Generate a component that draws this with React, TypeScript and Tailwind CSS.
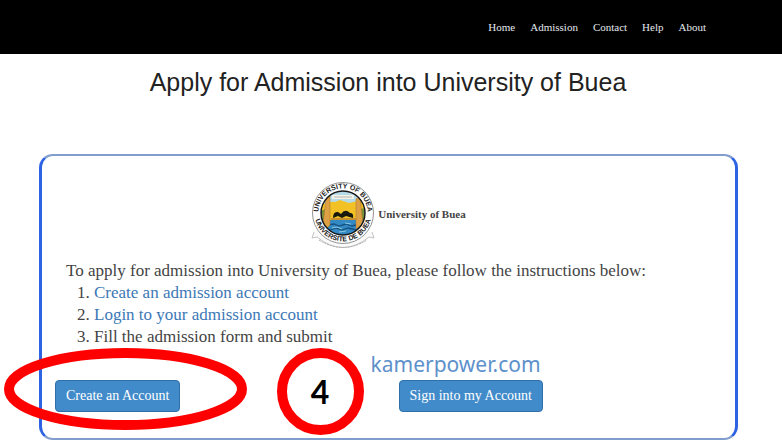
const navItems = ["Home", "Admission", "Contact", "Help", "About"];

const buttonClass =
  "h-8 rounded border border-[#2f70ab] bg-[#428bca] px-2.5 text-[14px] leading-5 text-white whitespace-nowrap";

function Seal() {
  return (
    <svg viewBox="0 0 64 68" className="h-[68px] w-16" role="img" aria-label="University of Buea seal">
      <defs>
        <path id="seal-top" d="M7.8 36 A24.7 24.7 0 1 1 56.2 36" />
        <path id="seal-bottom" d="M5 40 A28.5 28.5 0 0 0 59 40" />
        <clipPath id="seal-scene">
          <circle cx="32" cy="31" r="22" />
        </clipPath>
      </defs>
      <path d="M3 50 L1 56 L6 55 Q32 76 58 55 L63 56 L61 50" fill="#fafafa" stroke="#aaa" strokeWidth="0.7" />
      <path d="M8 58 Q32 73 56 58" fill="none" stroke="#aaa" strokeWidth="1" strokeDasharray="2 1" />
      <circle cx="32" cy="31" r="30.5" fill="#fff" stroke="#777" strokeWidth="0.8" />
      <g clipPath="url(#seal-scene)">
        <rect x="8" y="8" width="48" height="48" fill="#b5dbe8" />
        <path d="M9 24 Q18 19 24 20 L29 18 L38 21 L55 17 V42 H9Z" fill="#f2c126" />
        <path d="M9 29 L17 26 L19 38 L9 40Z M47 27 L55 26 V40 L47 38Z" fill="#789039" />
        <rect x="9" y="38" width="46" height="18" fill="#3389c4" />
        <path d="M17 43 l6 -1 5 2 7 -2 6 2 4 -1 M19 48 l6 -2 6 2 6 -2 8 2" fill="none" stroke="#14507f" strokeWidth="1.3" />
        <path d="M21 46 l5 -1 5 2 M34 41 l6 1 M28 50 l7 -1" fill="none" stroke="#8acbe4" strokeWidth="1" />
        <path d="M15 16 L19 14 V43 L15 47 L12 42Z M45 17 L49 15 L52 42 L45 47Z" fill="#dda044" stroke="#a9722b" strokeWidth="0.5" />
        <path d="M21 13 h22 v4 h-22Z" fill="#f4f3e9" />
        <path d="M23 15 h18" stroke="#999" strokeWidth="0.7" />
        <path d="M22 36 Q22 29 27 30 L30 32 Q34 26 39 31 Q43 31 42 36 L35 34 L31 36 L27 34Z" fill="#17190d" />
        <path d="M20 36 h25 v2 h-25Z" fill="#c6902f" />
      </g>
      <circle cx="32" cy="31" r="22" fill="none" stroke="#171717" strokeWidth="1.4" />
      <g fill="#222" fontFamily="Liberation Sans, sans-serif" fontWeight="700" fontSize="7">
        <text textAnchor="middle">
          <textPath href="#seal-top" startOffset="50%">UNIVERSITY OF BUEA</textPath>
        </text>
        <text textAnchor="middle">
          <textPath href="#seal-bottom" startOffset="50%">UNIVERSITE DE BUEA</textPath>
        </text>
      </g>
    </svg>
  );
}

export default function App() {
  return (
    <div className="min-h-screen bg-white pb-2 font-['Liberation_Serif',serif] text-[#444]">
      <header className="flex h-[54px] items-center justify-end bg-black pr-[76px]">
        <nav className="flex gap-[15px] text-[11px] leading-4 text-[#e4e9ef]">
          {navItems.map((item) => (
            <a key={item} href="#">
              {item}
            </a>
          ))}
        </nav>
      </header>

      <main>
        <h1 className="pt-3 pr-1.5 text-center font-['Liberation_Sans',sans-serif] text-[25px] leading-8 text-[#222]">
          Apply for Admission into University of Buea
        </h1>

        <section className="mt-14 mr-11 ml-[39px] rounded-[14px] border-x-[3px] border-y-2 border-x-[#2d62e3] border-y-[#819dcd] px-[13px] pt-[26px] pb-[26px]">
          <div className="flex items-center justify-center gap-[3px]">
            <Seal />
            <span className="mb-1 text-[11px] leading-4 font-bold">University of Buea</span>
          </div>

          <div className="mt-[10px] pl-[11px] text-[17px] leading-[22px]">
            <p>To apply for admission into University of Buea, please follow the instructions below:</p>
            <ol className="list-decimal pl-7">
              <li>
                <a href="#" className="text-[#3c78b5]">Create an admission account</a>
              </li>
              <li>
                <a href="#" className="text-[#3c78b5]">Login to your admission account</a>
              </li>
              <li>Fill the admission form and submit</li>
            </ol>
          </div>

          <div className="mt-8 grid grid-cols-2 gap-5">
            <div className="relative">
              <button type="button" className={buttonClass}>Create an Account</button>
              <svg
                viewBox="0 0 243 82"
                className="pointer-events-none absolute -top-8 -left-[51px] h-[82px] w-[243px]"
                aria-hidden="true"
              >
                <ellipse cx="121.5" cy="41" rx="116.5" ry="36" fill="none" stroke="#f00" strokeWidth="10" />
              </svg>
            </div>
            <div className="relative">
              <button type="button" className={buttonClass}>Sign into my Account</button>
              <span className="pointer-events-none absolute -top-8 -left-[122px] flex size-[87px] items-center justify-center rounded-full border-10 border-[#f00] font-[Lato,sans-serif] text-[32px] font-bold text-black">
                4
              </span>
              <span className="pointer-events-none absolute -top-8 -left-7 font-['Noto_Sans',sans-serif] text-[21px] leading-8 text-[#5e91cc]">
                kamerpower.com
              </span>
            </div>
          </div>
        </section>
      </main>
    </div>
  );
}
